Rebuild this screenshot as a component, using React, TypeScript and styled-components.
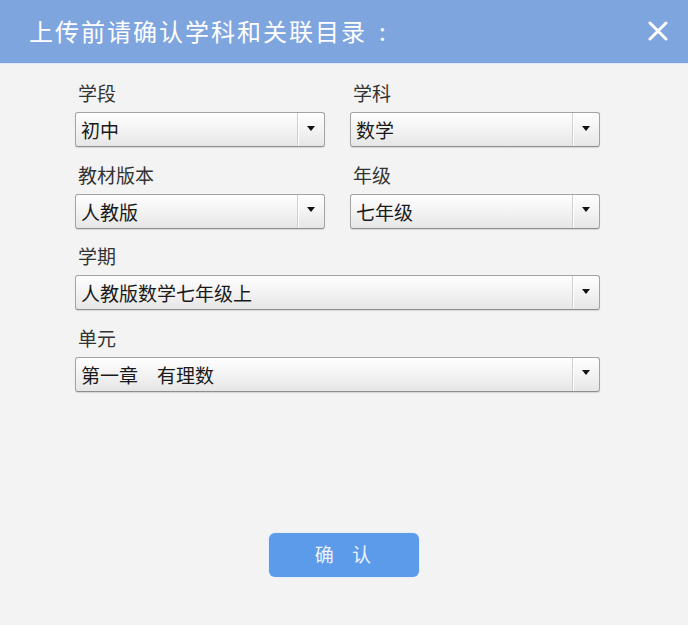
import React from "react";
import styled, { createGlobalStyle } from "styled-components";

const Global = createGlobalStyle`
  html, body { margin: 0; padding: 0; background: #f3f3f3; }
  body { font-family: "Noto Sans CJK SC", "Noto Sans", sans-serif; }
`;

const Dialog = styled.div`
  width: 688px;
  height: 625px;
  background: #f3f3f3;
  display: flex;
  flex-direction: column;
`;

const Header = styled.div`
  height: 64px;
  background: #7fa5df;
  display: flex;
  align-items: center;
  justify-content: space-between;
  padding: 0 18px 0 29px;
  box-sizing: border-box;
  border-bottom: 1px solid #dce6f5;
`;

const Title = styled.div`
  color: #ffffff;
  font-size: 24px;
  letter-spacing: 2px;
  line-height: 1;
  padding-bottom: 2px;
`;

const Colon = styled.span`
  margin-left: 12px;
`;

const Close = styled.button`
  width: 24px;
  height: 24px;
  padding: 0;
  border: none;
  background: transparent;
  display: flex;
  align-items: center;
  justify-content: center;
  margin-bottom: 1px;
`;

const Body = styled.div`
  flex: 1;
  display: flex;
  flex-direction: column;
  padding: 16px 0 0 75px;
`;

const Grid = styled.div`
  width: 525px;
  display: grid;
  grid-template-columns: 250px 250px;
  column-gap: 25px;
  row-gap: 14.5px;
`;

const Field = styled.div<{ $wide?: boolean }>`
  display: flex;
  flex-direction: column;
  grid-column: ${(p) => (p.$wide ? "1 / span 2" : "auto")};
`;

const Label = styled.div`
  font-size: 19px;
  line-height: 26px;
  height: 26px;
  color: #333;
  padding-left: 3px;
  margin-bottom: 6px;
`;

const SelectBox = styled.div`
  height: 35px;
  box-sizing: border-box;
  border: 1px solid #a3a3a3;
  border-bottom-color: #8e8e8e;
  border-radius: 3px;
  background: linear-gradient(#fefefe 0%, #f3f3f3 50%, #e6e6e6 100%);
  box-shadow: 0 1px 1px rgba(0, 0, 0, 0.12);
  display: flex;
  align-items: stretch;
`;

const Value = styled.div`
  flex: 1;
  font-size: 19px;
  line-height: 33px;
  color: #1a1a1a;
  padding-left: 5px;
  white-space: pre;
`;

const ArrowCell = styled.div`
  width: 27px;
  border-left: 1px solid #cfcfcf;
  box-shadow: inset 1px 0 0 #ffffff;
  display: flex;
  align-items: center;
  justify-content: center;
  padding-bottom: 3px;
  box-sizing: border-box;
`;

const Arrow = styled.div`
  width: 0;
  height: 0;
  border-left: 4px solid transparent;
  border-right: 4px solid transparent;
  border-top: 5px solid #111;
`;

const Footer = styled.div`
  display: flex;
  padding-left: 194px;
  margin-top: 141px;
`;

const Confirm = styled.button`
  width: 150px;
  height: 44px;
  border: none;
  border-radius: 6px;
  background: #5c9be9;
  color: #eef4fd;
  font-family: "Noto Sans CJK SC", sans-serif;
  font-size: 19px;
  letter-spacing: 7px;
  padding: 0 0 2px 5px;
  box-shadow: 0 0 0 1px #e6eefa;
`;

type SelectProps = { value: string };

const Select = ({ value }: SelectProps) => (
  <SelectBox>
    <Value>{value}</Value>
    <ArrowCell>
      <Arrow />
    </ArrowCell>
  </SelectBox>
);

export default function App() {
  return (
    <>
      <Global />
      <Dialog>
        <Header>
          <Title>
            上传前请确认学科和关联目录<Colon>:</Colon>
          </Title>
          <Close aria-label="关闭">
            <svg width="20" height="20" viewBox="0 0 20 20">
              <path d="M2 2 L18 18 M18 2 L2 18" stroke="#fff" strokeWidth="3" strokeLinecap="round" />
            </svg>
          </Close>
        </Header>
        <Body>
          <Grid>
            <Field>
              <Label>学段</Label>
              <Select value="初中" />
            </Field>
            <Field>
              <Label>学科</Label>
              <Select value="数学" />
            </Field>
            <Field>
              <Label>教材版本</Label>
              <Select value="人教版" />
            </Field>
            <Field>
              <Label>年级</Label>
              <Select value="七年级" />
            </Field>
            <Field $wide>
              <Label>学期</Label>
              <Select value="人教版数学七年级上" />
            </Field>
            <Field $wide>
              <Label>单元</Label>
              <Select value="第一章　有理数" />
            </Field>
          </Grid>
          <Footer>
            <Confirm>确 认</Confirm>
          </Footer>
        </Body>
      </Dialog>
    </>
  );
}
